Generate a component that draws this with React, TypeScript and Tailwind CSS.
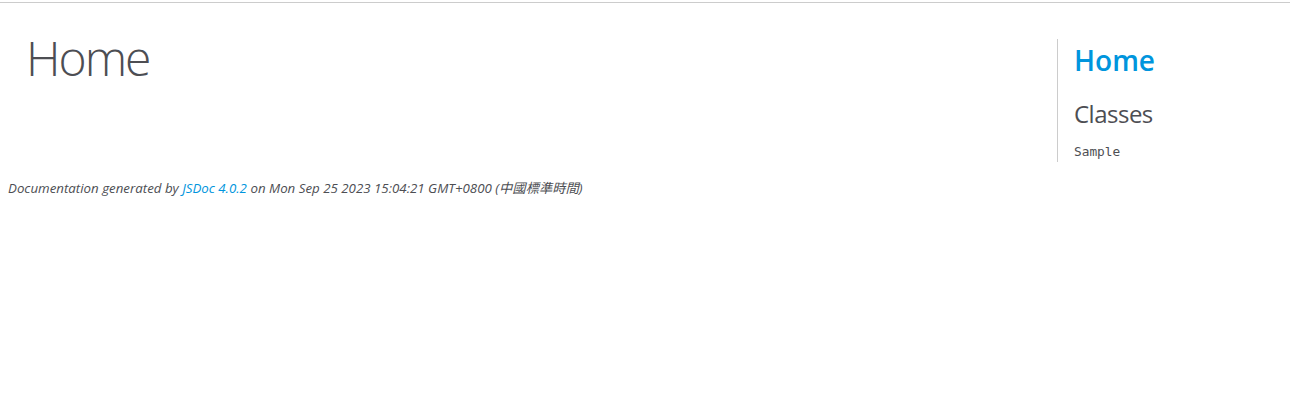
export default function App() {
  return (
    <div className="min-h-screen bg-white text-[#4d4e53] font-['Open_Sans','Noto_Sans_CJK_TC',sans-serif] text-[14px]">
      <div className="h-[3px] border-b border-[#cccccc]" />

      <div className="flex items-start">
        <div id="main" className="flex-1">
          <h1 className="mt-[23px] ml-[26px] text-[48px] font-light tracking-[-2px] leading-[64px]">Home</h1>
        </div>

        <nav className="mt-[36px] w-[233px] border-l border-[#cccccc] pl-[16px] pt-[2px] pb-[1px]">
          <h2 className="text-[28px] font-semibold leading-[38px]">
            <a href="#" className="text-[#0095dd]">
              Home
            </a>
          </h2>
          <h3 className="mt-[19px] text-[24px] leading-[32px] tracking-[-0.5px]">Classes</h3>
          <ul className="mt-[12px] leading-[18px]">
            <li>
              <a href="#" className="font-['DejaVu_Sans_Mono','Liberation_Mono',monospace] text-[12.8px] text-[#4d4e53]">
                Sample
              </a>
            </li>
          </ul>
        </nav>
      </div>

      <footer className="mt-[11px] py-[6px] pl-[8px] text-[13.3px] italic leading-[18px]">
        Documentation generated by{" "}
        <a href="#" className="text-[#0095dd]">
          JSDoc 4.0.2
        </a>{" "}
        on Mon Sep 25 2023 15:04:21 GMT+0800 (中國標準時間)
      </footer>
    </div>
  );
}
